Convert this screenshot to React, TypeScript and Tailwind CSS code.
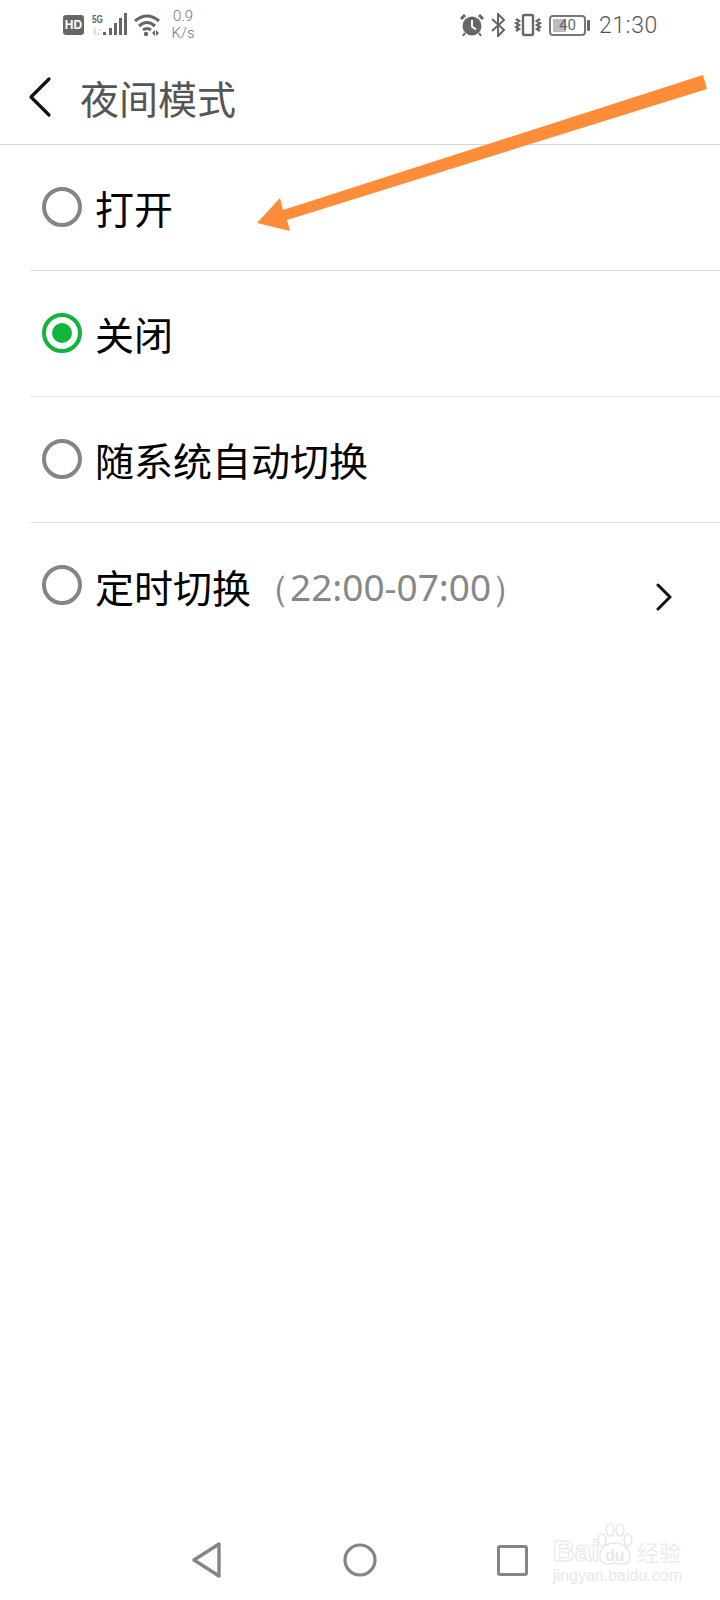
import type { ReactNode } from "react";

const cjk = "font-['Noto_Sans_CJK_SC','Noto_Sans',sans-serif]";

function Radio({ checked = false }: { checked?: boolean }) {
    if (checked) {
        return (
            <div className="mb-[2px] flex h-10 w-10 shrink-0 items-center justify-center rounded-full border-[4px] border-[#12b53c]">
                <div className="h-5 w-5 rounded-full bg-[#12b53c]" />
            </div>
        );
    }
    return <div className="mb-[2px] h-10 w-10 shrink-0 rounded-full border-[4px] border-[#858585]" />;
}

function OptionRow({
    label,
    checked,
    divider = true,
    children,
}: {
    label: string;
    checked?: boolean;
    divider?: boolean;
    children?: ReactNode;
}) {
    return (
        <div className={`ml-[30px] flex h-[126px] items-center pl-3 ${divider ? "border-b border-[#e2e2e2]" : ""}`}>
            <Radio checked={checked} />
            <span className={`ml-[13px] text-[39px] leading-none text-black ${cjk}`}>{label}</span>
            {children}
        </div>
    );
}

function StatusBar() {
    return (
        <div className="flex h-[50px] items-center text-[#666]">
            <div className="ml-[63px] flex h-5 w-[21px] items-center justify-center rounded-[3px] bg-[#666] font-['Liberation_Sans',sans-serif] text-[12px] font-bold text-white">
                HD
            </div>
            {/* network type with signal bars */}
            <svg className="ml-[8px]" width="36" height="24" viewBox="0 0 36 24">
                <text x="0" y="10" fontSize="11" fontWeight="700" fill="#666" fontFamily="Liberation Sans" textLength="11" lengthAdjust="spacingAndGlyphs">
                    5G
                </text>
                <path d="M2 15h1.5v7H2zM5 22l2-3v3zM7.5 15v3l2 0z" fill="#d0d0d0" />
                <rect x="11" y="19" width="3" height="3" fill="#666" />
                <rect x="17" y="15" width="3" height="7" fill="#666" />
                <rect x="22" y="10" width="3" height="12" fill="#666" />
                <rect x="27" y="5" width="3" height="17" fill="#666" />
                <rect x="32" y="0" width="3" height="22" fill="#666" />
            </svg>
            <svg className="ml-[6px]" width="28" height="24" viewBox="0 0 28 24" fill="none" stroke="#666" strokeWidth="3">
                <path d="M1 8 Q13 -2 25 8" />
                <path d="M5 13 Q13 6 21 13" />
                <path d="M9 17 Q13 14 17 17" />
                <circle cx="12" cy="21" r="2.2" fill="#666" stroke="none" />
                <path d="M18 20l3-3v6zM22 17l3 3-3 3z" fill="#666" stroke="none" />
            </svg>
            <div className="ml-[9px] flex w-[24px] flex-col items-center font-['Roboto',sans-serif] text-[15px] leading-[17px] font-light text-[#777]">
                <span>0.9</span>
                <span>K/s</span>
            </div>

            <svg className="ml-[264px]" width="26" height="24" viewBox="0 0 26 24">
                <circle cx="13" cy="13" r="9.5" fill="#666" />
                <path d="M13 7v6.5l4 3" fill="none" stroke="#fff" strokeWidth="2" />
                <path d="M2 6l4-4M24 6l-4-4" stroke="#666" strokeWidth="3" />
                <path d="M6 20l-2 3M20 20l2 3" stroke="#666" strokeWidth="2" />
            </svg>
            <svg className="ml-[6px]" width="14" height="24" viewBox="0 0 14 24" fill="none" stroke="#666" strokeWidth="2">
                <path d="M1 6l12 11-6 6V1l6 6L1 18" />
            </svg>
            <svg className="ml-[9px]" width="28" height="24" viewBox="0 0 28 24" fill="none" stroke="#666" strokeWidth="2.4">
                <rect x="9" y="2" width="10" height="20" rx="1.5" />
                <path d="M2 6l3 2-3 2 3 2-3 2 3 2-3 2M26 6l-3 2 3 2-3 2 3 2-3 2 3 2" />
            </svg>
            <div className="ml-[7px] flex items-center">
                <div className="relative flex h-[21px] w-[37px] items-center justify-center rounded-[4px] border-2 border-[#777] font-['Roboto',sans-serif] text-[15px] leading-none text-[#666]">
                    <div className="absolute top-[2px] bottom-[2px] left-[2px] w-[13px] bg-[#bbb]" />
                    <span className="relative">40</span>
                </div>
                <div className="ml-[1px] h-[11px] w-[3px] rounded-[1px] bg-[#666]" />
            </div>
            <span className="ml-[9px] font-['Roboto',sans-serif] text-[23px] leading-none font-light tracking-[0.6px] text-[#555]">21:30</span>
        </div>
    );
}

function Watermark() {
    return (
        <div className="absolute top-[1522px] left-[553px] h-[62px] w-[128px]">
            <svg className="absolute top-0 left-[42px]" width="40" height="46" viewBox="0 0 40 46" fill="none" stroke="#e8e8e8" strokeWidth="1.5">
                <ellipse cx="7" cy="18" rx="4" ry="6" />
                <ellipse cx="15" cy="8" rx="4" ry="6" />
                <ellipse cx="25" cy="8" rx="4" ry="6" />
                <ellipse cx="33" cy="18" rx="4" ry="6" />
                <path d="M5 34 C5 24 13 21 20 21 C27 21 35 26 35 35 C35 43 27 43 20 41 C13 43 5 43 5 34Z" />
            </svg>
            <span className="absolute top-[14px] left-0 font-['Liberation_Sans',sans-serif] text-[30px] leading-none font-bold text-transparent [-webkit-text-stroke:1px_#e6e6e6]">
                Bai
            </span>
            <span className="absolute top-[26px] left-[52px] font-['Liberation_Sans',sans-serif] text-[16px] leading-none font-bold text-[#e8e8e8]">du</span>
            <span className={`absolute top-[18px] left-[84px] text-[22px] leading-none text-[#ececec] ${cjk}`}>经验</span>
            <span className="absolute top-[46px] left-0 font-['Liberation_Sans',sans-serif] text-[16px] leading-none text-[#e8e8e8]">
                jingyan.baidu.com
            </span>
        </div>
    );
}

export default function App() {
    return (
        <div className="relative flex h-[1600px] w-[720px] flex-col overflow-hidden bg-white">
            <StatusBar />

            <div className="flex h-[95px] items-center border-b border-[#d4d4d4]">
                <svg className="ml-[27px]" width="26" height="42" viewBox="0 0 26 42" fill="none" stroke="#111" strokeWidth="3.2" strokeLinecap="round" strokeLinejoin="round">
                    <path d="M22 3 L4 21 L22 39" />
                </svg>
                <span className={`ml-[27px] text-[39px] leading-none text-[#555] ${cjk}`}>夜间模式</span>
            </div>

            <OptionRow label="打开" />
            <OptionRow label="关闭" checked />
            <OptionRow label="随系统自动切换" />
            <OptionRow label="定时切换" divider={false}>
                <span className="ml-[2px] font-['Noto_Sans',sans-serif] text-[37px] leading-none text-[#888]">（22:00-07:00）</span>
                <svg className="mt-[22px] mr-[47px] ml-auto" width="18" height="28" viewBox="0 0 18 28" fill="none" stroke="#111" strokeWidth="3" strokeLinecap="round" strokeLinejoin="round">
                    <path d="M3 2 L15 14 L3 26" />
                </svg>
            </OptionRow>

            {/* system navigation buttons */}
            <div className="mt-auto mb-[22px] flex h-[36px] items-center pl-[191px]">
                <svg width="32" height="36" viewBox="0 0 32 36" fill="none" stroke="#858585" strokeWidth="3.4" strokeLinejoin="round">
                    <path d="M28 2 L3 18 L28 34Z" />
                </svg>
                <svg className="ml-[120px]" width="34" height="34" viewBox="0 0 34 34" fill="none" stroke="#858585" strokeWidth="3.2">
                    <circle cx="17" cy="17" r="15" />
                </svg>
                <div className="ml-[120px] h-[31px] w-[31px] rounded-[3px] border-[3.5px] border-[#858585]" />
            </div>

            <Watermark />

            {/* orange annotation arrow over the list */}
            <svg className="absolute top-0 left-0" width="720" height="300" viewBox="0 0 720 300">
                <path d="M257 223 L280 198 L283 210 L703 75 L707 89 L287 220 L290 231 Z" fill="#ff8c38" />
            </svg>
        </div>
    );
}
